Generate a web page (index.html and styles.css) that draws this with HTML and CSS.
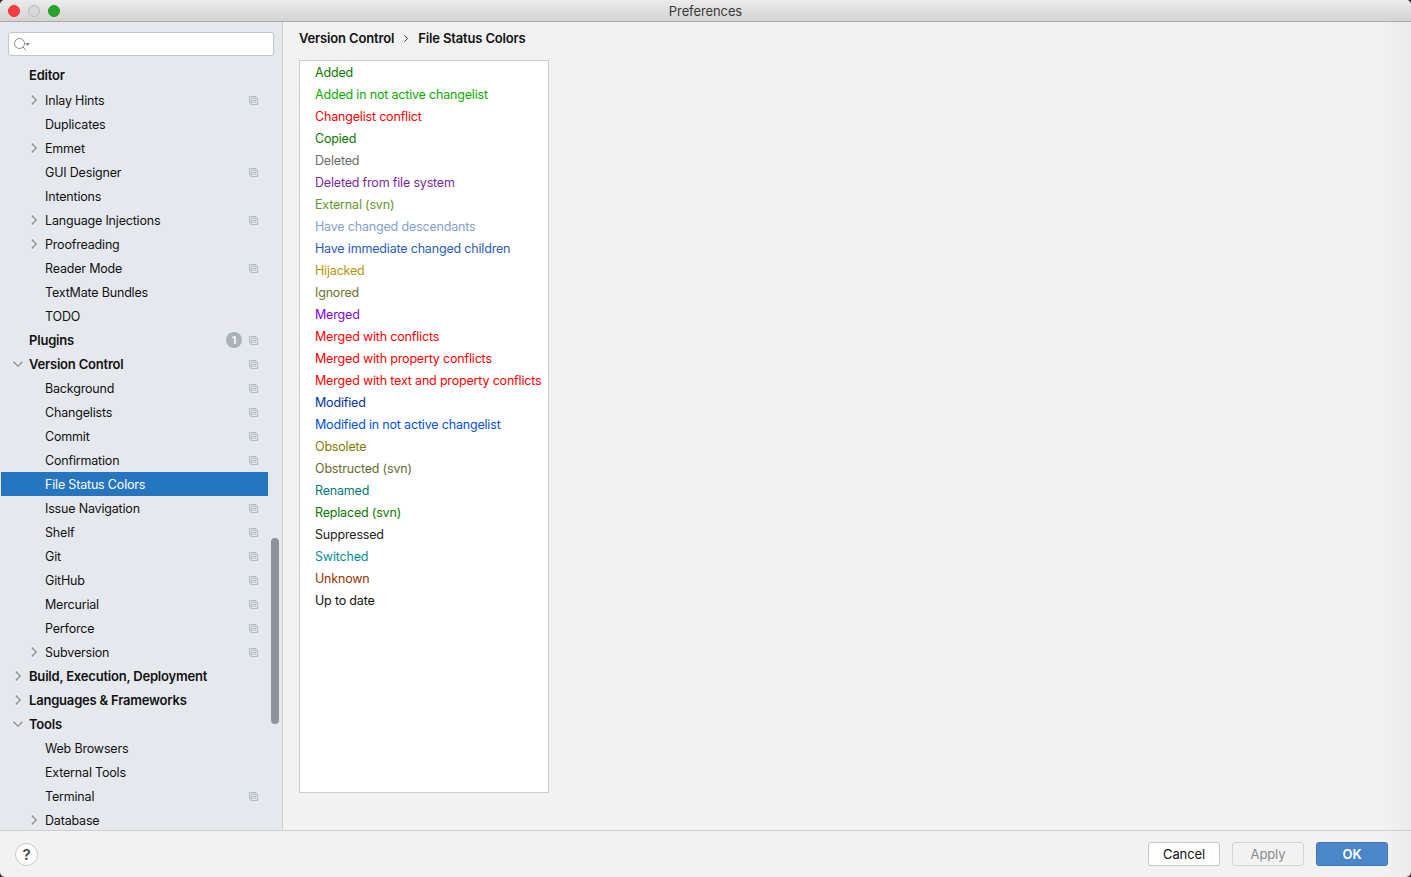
FILE: index.html
```html
<!DOCTYPE html>
<html lang="en">
<head>
<meta charset="UTF-8">
<title>Preferences</title>
<link rel="stylesheet" href="styles.css">
</head>
<body>
<svg class="defs" width="0" height="0">
    <symbol id="copy" viewBox="0 0 10 10">
        <path d="M2.500 7.500H.5V.5h7v2" fill="none" stroke="currentColor"/>
        <path d="M2.500 2.500h7v7h-7zM4 5h4M4 7h4" fill="none" stroke="currentColor"/>
    </symbol>
    <symbol id="right" viewBox="0 0 10 10"><path d="M2.800 .5L7.200 5 2.800 9.500" fill="none" stroke="currentColor" stroke-width="1.200"/></symbol>
    <symbol id="down" viewBox="0 0 10 10"><path d="M.5 2.800L5 7.200 9.500 2.800" fill="none" stroke="currentColor" stroke-width="1.200"/></symbol>
</svg>
<div class="window">
    <div class="titlebar">
        <div class="lights">
            <span class="light red"></span>
            <span class="light gray"></span>
            <span class="light green"></span>
        </div>
        <div class="title">Preferences</div>
    </div>
    <div class="main">
        <div class="sidebar">
            <div class="search">
                <svg class="search-icon" width="18" height="14" viewBox="0 0 18 14">
                    <circle cx="5.500" cy="6.500" r="5" fill="none" stroke="#8a8a8a"/>
                    <path d="M9 10l3 3.500" stroke="#8a8a8a" fill="none"/>
                    <path d="M11 6h5l-2.500 3z" fill="#8a8a8a"/>
                </svg>
            </div>
            <div class="tree" id="tree"></div>
            <div class="scrollbar"></div>
        </div>
        <div class="content">
            <div class="breadcrumb">
                <span>Version Control</span>
                <svg class="crumb-sep" width="8" height="7"><use href="#right"/></svg>
                <span>File Status Colors</span>
            </div>
            <div class="status-list" id="statusList"></div>
        </div>
    </div>
    <div class="footer">
        <div class="help">?</div>
        <div class="buttons">
            <button class="btn">Cancel</button>
            <button class="btn disabled">Apply</button>
            <button class="btn primary">OK</button>
        </div>
    </div>
</div>
<script>
    // label, level, arrow, copy icon
    const treeItems = [
        ['Editor', 0, '', false],
        ['Inlay Hints', 1, 'right', true],
        ['Duplicates', 1, '', false],
        ['Emmet', 1, 'right', false],
        ['GUI Designer', 1, '', true],
        ['Intentions', 1, '', false],
        ['Language Injections', 1, 'right', true],
        ['Proofreading', 1, 'right', false],
        ['Reader Mode', 1, '', true],
        ['TextMate Bundles', 1, '', false],
        ['TODO', 1, '', false],
        ['Plugins', 0, '', true, '1'],
        ['Version Control', 0, 'down', true],
        ['Background', 1, '', true],
        ['Changelists', 1, '', true],
        ['Commit', 1, '', true],
        ['Confirmation', 1, '', true],
        ['File Status Colors', 1, '', false, '', true],
        ['Issue Navigation', 1, '', true],
        ['Shelf', 1, '', true],
        ['Git', 1, '', true],
        ['GitHub', 1, '', true],
        ['Mercurial', 1, '', true],
        ['Perforce', 1, '', true],
        ['Subversion', 1, 'right', true],
        ['Build, Execution, Deployment', 0, 'right', false],
        ['Languages & Frameworks', 0, 'right', false],
        ['Tools', 0, 'down', false],
        ['Web Browsers', 1, '', false],
        ['External Tools', 1, '', false],
        ['Terminal', 1, '', true],
        ['Database', 1, 'right', false]
    ];

    const statuses = [
        ['Added', '#0a7700'],
        ['Added in not active changelist', '#0bab00'],
        ['Changelist conflict', '#ff0000'],
        ['Copied', '#0a7700'],
        ['Deleted', '#6c6c6c'],
        ['Deleted from file system', '#7b2a9e'],
        ['External (svn)', '#62962a'],
        ['Have changed descendants', '#83a0cc'],
        ['Have immediate changed children', '#2a5cb8'],
        ['Hijacked', '#b8930a'],
        ['Ignored', '#72722a'],
        ['Merged', '#7f00e0'],
        ['Merged with conflicts', '#ff0000'],
        ['Merged with property conflicts', '#ff0000'],
        ['Merged with text and property conflicts', '#ff0000'],
        ['Modified', '#0032a0'],
        ['Modified in not active changelist', '#0050e0'],
        ['Obsolete', '#7f7a00'],
        ['Obstructed (svn)', '#6a6a30'],
        ['Renamed', '#007a72'],
        ['Replaced (svn)', '#0a7700'],
        ['Suppressed', '#222222'],
        ['Switched', '#009090'],
        ['Unknown', '#993300'],
        ['Up to date', '#111111']
    ];

    const tree = document.getElementById('tree');
    treeItems.forEach(function(item) {
        const row = document.createElement('div');
        row.className = 'row level' + item[1] + (item[5] ? ' selected' : '');
        const arrow = item[2] ? `<svg class="arrow" width="10" height="10"><use href="#${item[2]}"/></svg>` : '';
        const badge = item[4] ? `<span class="badge">${item[4]}</span>` : '';
        const copy = item[3] ? '<svg class="copy" width="9" height="9"><use href="#copy"/></svg>' : '';
        row.innerHTML = `${arrow}<span class="label">${item[0].replace('&', '&amp;')}</span>${badge}${copy}`;
        tree.appendChild(row);
    });

    const statusList = document.getElementById('statusList');
    statuses.forEach(function(status) {
        const row = document.createElement('div');
        row.className = 'status';
        row.textContent = status[0];
        row.style.color = status[1];
        statusList.appendChild(row);
    });
</script>
</body>
</html>
```

FILE: styles.css
```css
html, body {
    margin: 0;
    height: 100%;
    background: #2a2a2a;
    overflow: hidden;
}
body {
    font-family: Inter, "Liberation Sans", sans-serif;
    font-size: 12.5px;
    letter-spacing: -0.18px;
    color: #111;
}
.defs {
    position: absolute;
}
.window {
    width: 1411px;
    height: 877px;
    display: flex;
    flex-direction: column;
    background: linear-gradient(to right, #f2f2f2 calc(100% - 30px), #ebebeb);
    border-radius: 5px;
    overflow: hidden;
}
.titlebar {
    height: 21px;
    flex: none;
    display: flex;
    align-items: center;
    position: relative;
    background: linear-gradient(#ebebeb, #d3d3d3);
    border-bottom: 1px solid #a9a9a9;
}
.lights {
    display: flex;
    gap: 8px;
    padding-left: 8px;
    margin-top: 1px;
}
.light {
    width: 12px;
    height: 12px;
    border-radius: 50%;
    box-sizing: border-box;
}
.red { background: #fc3d40; border: 1px solid #e2333a; }
.gray { background: #d8d8d8; border: 1px solid #b8b8b8; }
.green { background: #28a52b; border: 1px solid #229a26; }
.title {
    position: absolute;
    left: 0;
    right: 0;
    text-align: center;
    color: #3a3a3a;
    font-size: 13px;
    letter-spacing: -0.1px;
}
.main {
    flex: 1;
    display: flex;
    min-height: 0;
}
.sidebar {
    width: 281px;
    flex: none;
    position: relative;
    background: #e5e9ee;
    border-right: 1px solid #cfcfcf;
    overflow: hidden;
    padding: 10px 0 0 1px;
}
.search {
    width: 259px;
    height: 22px;
    margin-left: 7px;
    background: #fff;
    border: 1px solid #c4c4c4;
    border-radius: 3px;
    display: flex;
    align-items: center;
    padding-left: 5px;
}
.tree {
    margin-top: 7px;
    width: 267px;
}
.row {
    height: 24px;
    display: flex;
    align-items: center;
    position: relative;
    white-space: nowrap;
}
.level0 {
    padding-left: 28px;
    font-size: 13px;
    letter-spacing: -0.2px;
    font-weight: 600;
}
.level1 {
    padding-left: 44px;
}
.row:first-child {
    height: 23px;
    padding-bottom: 2px;
}
.selected {
    background: #2675bf;
    color: #fff;
}
.arrow {
    position: absolute;
    color: #8a8a8a;
    top: 7px;
}
.level0 .arrow { left: 12px; }
.level1 .arrow { left: 28px; }
.copy {
    position: absolute;
    left: 248px;
    top: 8px;
    color: #aab2ba;
}
.badge {
    position: absolute;
    left: 225px;
    top: 4px;
    width: 16px;
    height: 16px;
    border-radius: 50%;
    background: #aab2ba;
    color: #fff;
    font-size: 11px;
    text-align: center;
    line-height: 16px;
}
.scrollbar {
    position: absolute;
    left: 271px;
    top: 516px;
    width: 8px;
    height: 186px;
    border-radius: 4px;
    background: #8f9397;
}
.content {
    flex: 1;
    padding: 0 16px;
}
.breadcrumb {
    height: 32px;
    display: flex;
    align-items: center;
    gap: 8px;
    font-size: 13px;
    letter-spacing: -0.15px;
    font-weight: 600;
    color: #111;
}
.crumb-sep {
    color: #111;
}
.status-list {
    margin-top: 6px;
    width: 248px;
    height: 730px;
    background: #fff;
    border: 1px solid #cdcdcd;
    padding-top: 1px;
}
.status {
    height: 22px;
    line-height: 21px;
    padding-left: 15px;
    white-space: nowrap;
}
.footer {
    height: 46px;
    flex: none;
    display: flex;
    align-items: center;
    justify-content: space-between;
    border-top: 1px solid #cdcdcd;
    padding: 0 23px 0 15px;
}
.help {
    width: 21px;
    height: 21px;
    border: 1px solid #c8c8c8;
    border-radius: 50%;
    background: #fff;
    text-align: center;
    line-height: 21px;
    font-size: 15px;
    font-weight: 600;
    color: #444;
}
.buttons {
    display: flex;
    gap: 12px;
}
.btn {
    width: 72px;
    height: 24px;
    padding: 0;
    font: inherit;
    font-size: 13px;
    letter-spacing: -0.1px;
    color: #111;
    background: #fff;
    border: 1px solid #c6c6c6;
    border-radius: 3px;
}
.disabled {
    background: #f2f2f2;
    color: #8a8a8a;
    border-color: #d4d4d4;
}
.primary {
    background: #4a87c8;
    border-color: #3f78b5;
    color: #fff;
    font-weight: 600;
}
```
